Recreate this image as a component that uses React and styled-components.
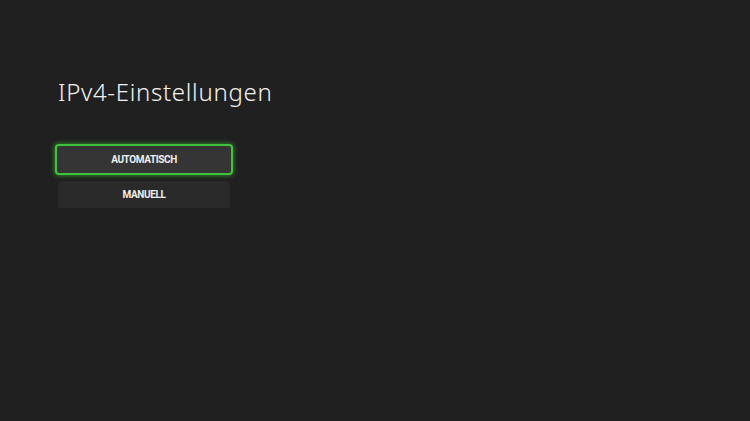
import React from "react";
import styled, { createGlobalStyle } from "styled-components";

const Global = createGlobalStyle`
  html, body { margin: 0; padding: 0; background: #202020; }
  body { width: 750px; height: 421px; overflow: hidden; }
`;

const Page = styled.div`
  width: 750px;
  height: 421px;
  background: #202020;
  box-sizing: border-box;
  padding: 76px 0 0 58px;
  font-family: "Noto Sans", "DejaVu Sans", sans-serif;
  color: #ffffff;
`;

const Title = styled.h1`
  margin: 0;
  font-size: 24px;
  font-weight: 300;
  line-height: 32px;
  letter-spacing: 0.7px;
  color: #f2f2f2;
`;

const Options = styled.div`
  margin-top: 36px;
  width: 178px;
  display: flex;
  flex-direction: column;
  align-items: center;
  gap: 6px;
  margin-left: -3px;
`;

const Option = styled.div`
  box-sizing: border-box;
  width: ${(p) => (p.$focused ? "178px" : "172px")};
  height: ${(p) => (p.$focused ? "31px" : "27px")};
  border-radius: ${(p) => (p.$focused ? "4px" : "3px")};
  background: ${(p) => (p.$focused ? "#353535" : "#2a2a2a")};
  border: ${(p) => (p.$focused ? "2px solid #3fc33a" : "none")};
  box-shadow: ${(p) =>
    p.$focused ? "0 0 4px 1px rgba(60, 200, 50, 0.55)" : "none"};
  display: flex;
  align-items: center;
  justify-content: center;
  font-family: "Roboto", "Liberation Sans", sans-serif;
  font-size: 10px;
  font-weight: 700;
  letter-spacing: -0.4px;
  color: #f0f0f0;
`;

export default function App() {
  return (
    <>
      <Global />
      <Page>
        <Title>IPv4-Einstellungen</Title>
        <Options>
          <Option $focused>AUTOMATISCH</Option>
          <Option>MANUELL</Option>
        </Options>
      </Page>
    </>
  );
}
